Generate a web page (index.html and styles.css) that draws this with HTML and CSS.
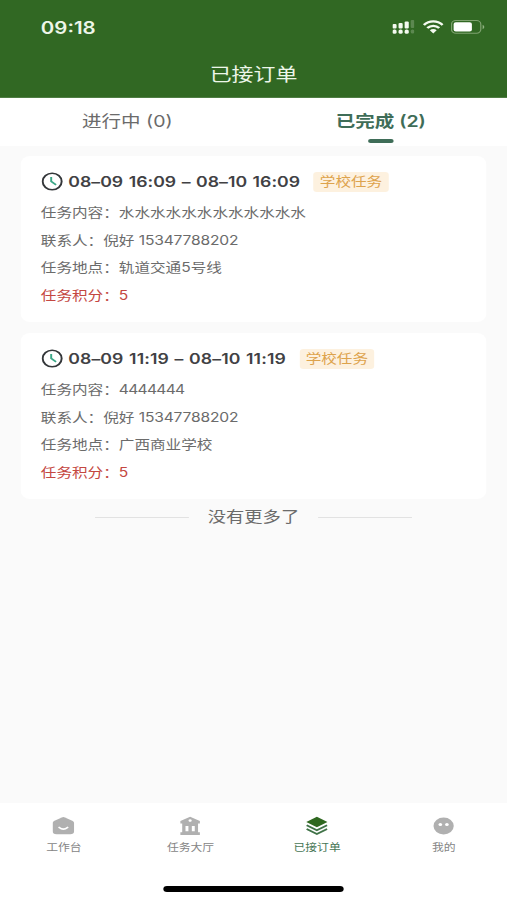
FILE: index.html
```html
<!DOCTYPE html>
<html lang="zh-CN">
<head>
<meta charset="utf-8">
<title>已接订单</title>
<link rel="stylesheet" href="styles.css">
</head>
<body>
<div class="app">
  <header class="header">
    <div class="status">
      <span class="time">09:18</span>
      <div class="status-icons">
        <svg class="signal" width="18" height="14" viewBox="0 0 18 14" fill="#f4faf0"><rect x="0" y="4" width="3.4" height="4.4" rx="1"/><rect x="5" y="3" width="3.4" height="5.4" rx="1"/><rect x="10" y="1.5" width="3.4" height="6.9" rx="1"/><rect x="0" y="9.5" width="3.4" height="4.200" rx="1.5"/><rect x="5" y="9.5" width="3.4" height="4.200" rx="1.5"/><rect x="10" y="9.5" width="3.4" height="4.200" rx="1.5"/><g opacity=".22"><rect x="15" y="0" width="3" height="8" rx="1"/><rect x="15" y="9.5" width="3" height="4" rx="1.5"/></g></svg>
        <svg class="wifi" width="17" height="14" viewBox="0 0 17 14" fill="none" stroke="#f4faf0" stroke-width="2.2"><path d="M.8 5.1C5.2.2 11.8.2 16.2 5.1M3.6 8.1c2.8-3 7-3 9.8 0"/><path d="M5.7 10.2c1.6-1.5 4-1.5 5.6 0L8.5 13.4z" fill="#f4faf0" stroke="none"/></svg>
        <svg width="28" height="14" viewBox="0 0 28 14"><rect x=".5" y=".6" width="24" height="12.6" rx="3.6" fill="none" stroke="#7fa370"/><rect x="2.2" y="2.3" width="15" height="9.2" rx="1.8" fill="#fff"/><path d="M26 4.8v4.4q1.4-.7 1.4-2.2T26 4.8" fill="#91b283"/></svg>
      </div>
    </div>
    <h1 class="title">已接订单</h1>
  </header>
  <nav class="tabs">
    <div class="tab">进行中 (0)</div>
    <div class="tab tab-active">已完成 (2)</div>
  </nav>
  <main class="list">
    <article class="card">
      <div class="card-head">
        <svg class="clock" width="18" height="19" viewBox="0 0 18 19" fill="none"><ellipse cx="8.800" cy="9.500" rx="7.800" ry="8.300" stroke="#34373a" stroke-width="1.6"/><path d="M8 5v4.400l4 3.400" stroke="#3ba787" stroke-width="1.6"/></svg>
        <span class="date">08–09 16:09 – 08–10 16:09</span>
        <span class="tag">学校任务</span>
      </div>
      <p class="row">任务内容：水水水水水水水水水水水水</p>
      <p class="row">联系人：倪好 <span class="phone">15347788202</span></p>
      <p class="row">任务地点：轨道交通5号线</p>
      <p class="row points">任务积分：5</p>
    </article>
    <article class="card">
      <div class="card-head">
        <svg class="clock" width="18" height="19" viewBox="0 0 18 19" fill="none"><ellipse cx="8.800" cy="9.500" rx="7.800" ry="8.300" stroke="#34373a" stroke-width="1.6"/><path d="M8 5v4.400l4 3.400" stroke="#3ba787" stroke-width="1.6"/></svg>
        <span class="date date-narrow">08–09 11:19 – 08–10 11:19</span>
        <span class="tag">学校任务</span>
      </div>
      <p class="row">任务内容：<span class="digits">4444444</span></p>
      <p class="row">联系人：倪好 <span class="phone">15347788202</span></p>
      <p class="row">任务地点：广西商业学校</p>
      <p class="row points">任务积分：5</p>
    </article>
    <div class="end"><i class="line"></i><span>没有更多了</span><i class="line"></i></div>
  </main>
  <footer class="footer">
    <div class="nav">
      <div class="item">
        <svg width="18" height="20" viewBox="0 0 18 20"><path d="M7.7 1.4q1.3-.7 2.6 0l6 3.3q1.5.9 1.5 2.4v8q0 3.2-3.2 3.2H3.4Q.2 18.300.2 15.100v-8q0-1.500 1.500-2.400z" fill="#b0b0b0"/><path d="M5.600 11.500q3.400 3.200 6.800 0" fill="none" stroke="#fff" stroke-width="1.700" stroke-linecap="round"/></svg>
        <span>工作台</span>
      </div>
      <div class="item">
        <svg width="18" height="20" viewBox="0 0 18 20"><path fill="#b0b0b0" fill-rule="evenodd" d="M9 .8 17 5v2.500H1V5zM9 3.200a1.300 1.300 0 1 0 .01 0zM2.500 7.500h13v8.800h-13zM5.200 10v5.300h2.400V10zM10.400 10v5.300h2.400V10zM1 16.300h16V19H1z"/></svg>
        <span>任务大厅</span>
      </div>
      <div class="item item-active">
        <svg width="18" height="20" viewBox="0 0 18 20"><path d="M9 .8 17.700 6 9 11.200.3 6z" fill="#2f6820"/><path d="M.6 9.300 9 14.200l8.400-4.900M.6 13 9 17.900l8.400-4.900" fill="none" stroke="#407348" stroke-width="1.700"/></svg>
        <span>已接订单</span>
      </div>
      <div class="item">
        <svg width="18" height="20" viewBox="0 0 18 20"><ellipse cx="9" cy="10" rx="8.300" ry="8.500" fill="#b0b0b0"/><circle cx="6.300" cy="8.400" r="1.500" fill="#fff"/><circle cx="11.700" cy="8.400" r="1.500" fill="#fff"/></svg>
        <span>我的</span>
      </div>
    </div>
    <div class="home-bar"></div>
  </footer>
</div>
</body>
</html>
```
FILE: styles.css
```css
* { box-sizing: border-box; }
body {
  margin: 0;
  width: 507px;
  height: 900px;
  overflow: hidden;
  background: #fff;
}
/* The 416px layout is widened to fill the 507px viewport. */
.app {
  width: 416px;
  height: 900px;
  display: flex;
  flex-direction: column;
  transform: scaleX(1.21875);
  transform-origin: 0 0;
  background: #fafafa;
  color: #6b6b6b;
  font-family: Inter, "Noto Sans CJK SC", sans-serif;
}
.header {
  height: 98px;
  background: #316823;
  border-bottom: 1px solid #4f7d43;
  color: #edf6e9;
}
.status {
  height: 54px;
  padding: 0 18px 0 33.500px;
  display: flex;
  align-items: center;
  justify-content: space-between;
}
.time {
  font-size: 16.800px;
  font-weight: 600;
  line-height: 20px;
  padding-top: 1px;
}
.status-icons { display: flex; align-items: center; }
.wifi { margin: 0 6px 0 7px; }
.title {
  margin: 7px 0 0;
  font-size: 18px;
  font-weight: 400;
  line-height: 28px;
  text-align: center;
}
.tabs {
  height: 48px;
  display: flex;
  background: #fff;
}
.tab {
  flex: 1;
  display: flex;
  flex-direction: column;
  align-items: center;
  font-size: 16px;
  line-height: 24px;
  padding: 11px 0 0 1px;
}
.tab-active { color: #3f6d58; font-weight: 600; }
.tab-active::after {
  content: "";
  width: 21px;
  height: 4px;
  margin: 6px 1px 0 0;
  border-radius: 2px;
  background: #3f6d58;
}
.list {
  flex: 1;
  padding: 10px 17px 0;
}
.card {
  height: 166px;
  margin-bottom: 11px;
  padding: 12px 16.5px;
  border-radius: 8px;
  background: #fff;
}
.card-head {
  height: 27px;
  margin-bottom: 4px;
  display: flex;
  align-items: center;
}
.clock { margin-right: 4.500px; }
.date {
  font-size: 14.500px;
  font-weight: 600;
  letter-spacing: .02px;
  word-spacing: .85px;
  color: #414144;
  white-space: nowrap;
}
.date-narrow { letter-spacing: .08px; }
.tag {
  margin-left: 11px;
  padding: 0 5.200px;
  height: 20px;
  border-radius: 3px;
  background: #fdf1df;
  color: #dda34c;
  font-size: 12.800px;
  line-height: 20px;
}
.row {
  margin: 0;
  font-size: 12.800px;
  line-height: 27.700px;
  white-space: nowrap;
}
.phone { letter-spacing: -.15px; }
.digits { letter-spacing: -.57px; }
.points { color: #c44741; }
.end {
  display: flex;
  align-items: center;
  justify-content: center;
  gap: 15.500px;
  margin-top: -6px;
  font-size: 15px;
  line-height: 26px;
}
.line { width: 77px; height: 1px; background: #e2e2e2; }
.footer { height: 97px; background: #fff; }
.nav { display: flex; padding: 12.500px 0 0 .5px; }
.item {
  flex: 1;
  display: flex;
  flex-direction: column;
  align-items: center;
  color: #858585;
  font-size: 9.700px;
  line-height: 16px;
}
.item span { margin-top: 4px; }
.item-active { color: #467655; }
.home-bar {
  width: 148px;
  height: 6px;
  margin: 30px auto 0;
  border-radius: 3px;
  background: #000;
}
```
